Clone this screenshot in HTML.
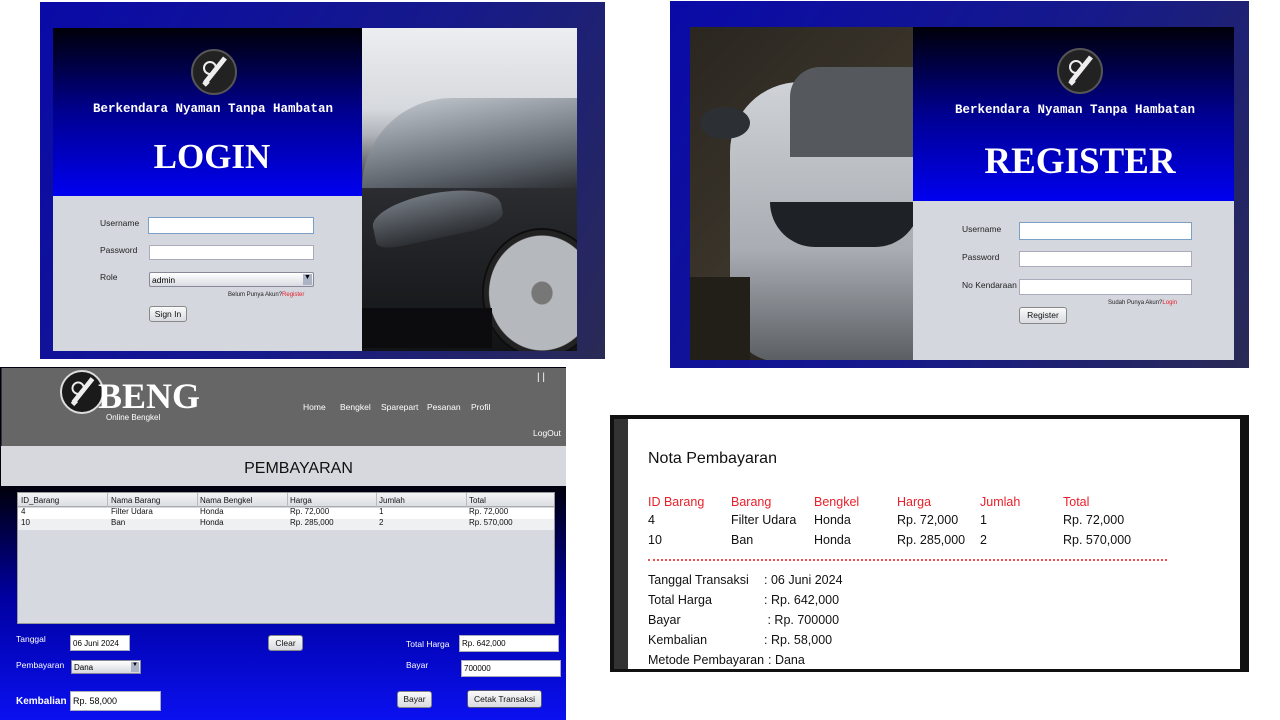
<!DOCTYPE html>
<html><head><meta charset="utf-8"><style>
*{margin:0;padding:0;box-sizing:border-box}
body{width:1280px;height:720px;background:#fff;position:relative;overflow:hidden;font-family:"Liberation Sans",sans-serif}
.a{position:absolute}
.frame{background:linear-gradient(120deg,#0a0aa8 0%,#161a8a 55%,#2a2a55 100%)}
.bluegrad{background:linear-gradient(#000008 0%,#000090 50%,#0000f0 100%)}
.gray{background:#d4d7de}
.mono{font-family:"Liberation Mono",monospace;font-weight:bold;color:#fff;font-size:12.5px;white-space:nowrap}
.serif{font-family:"Liberation Serif",serif;font-weight:bold;color:#fff}
.lbl{font-size:8.5px;color:#222}
.inp{background:#fff;border:1px solid #aab}
.btn{background:linear-gradient(#fafafa,#d8dbe0);border:1px solid #888;border-radius:3px;font-size:8.5px;color:#111;text-align:center}
.logo{border-radius:50%;background:#222;border:2px solid #555}
.wl{font-size:8.5px;color:#fff}
.nt{font-size:12.5px;color:#111}
.red{color:#e8202a}
.tc{white-space:nowrap}
</style></head><body>

<!-- LOGIN -->
<div class="a frame" style="left:40px;top:2px;width:565px;height:357px"></div>
<div class="a bluegrad" style="left:53px;top:28px;width:309px;height:168px"></div>
<div class="a logo" style="left:191px;top:49px;width:46px;height:46px"><svg width="42" height="42" viewBox="0 0 42 42"><path d="M12 32 L28 12 M15 30 l-4 4 M28 12 l4 -5" stroke="#eee" stroke-width="5" fill="none"/><circle cx="17" cy="17" r="6" fill="none" stroke="#eee" stroke-width="2"/></svg></div>
<div class="a mono" style="left:93px;top:102px">Berkendara Nyaman Tanpa Hambatan</div>
<div class="a serif" style="left:53px;width:318px;text-align:center;top:137px;font-size:35px">LOGIN</div>
<div class="a gray" style="left:53px;top:196px;width:309px;height:155px"></div>
<div class="a lbl" style="left:100px;top:218px">Username</div>
<div class="a inp" style="left:148px;top:217px;width:166px;height:17px;border-color:#7aa0c8"></div>
<div class="a lbl" style="left:100px;top:245px">Password</div>
<div class="a inp" style="left:149px;top:245px;width:165px;height:15px"></div>
<div class="a lbl" style="left:100px;top:272px">Role</div>
<div class="a" style="left:149px;top:272px;width:165px;height:15px;background:linear-gradient(#fff,#d8dbe2);border:1px solid #889;border-radius:2px;font-size:8.5px;padding:2px 2px">admin<span style="position:absolute;right:1px;top:1px;width:9px;height:11px;background:#aab4c4;font-size:7px;text-align:center">▼</span></div>
<div class="a" style="left:228px;top:292px;font-size:6px;color:#222">Belum Punya Akun?<span class="red">Register</span></div>
<div class="a btn" style="left:149px;top:306px;width:38px;height:16px;line-height:14px">Sign In</div>
<div class="a" style="left:362px;top:28px;width:215px;height:323px;overflow:hidden;background:linear-gradient(#eceef0 0%,#d6d9dd 25%,#b0b4ba 33%,#2a2c30 50%,#121315 100%)">
 <div class="a" style="left:0;top:70px;width:230px;height:90px;background:linear-gradient(170deg,#c8ced4,#5d636b 70%,#2a2c30);border-radius:150px 0 0 0"></div>
 <div class="a" style="left:10px;top:165px;width:130px;height:45px;background:linear-gradient(#70767e,#2c2f33);border-radius:50% 60% 30% 20%;transform:rotate(-12deg)"></div>
 <div class="a" style="left:120px;top:200px;width:120px;height:130px;border-radius:50%;background:radial-gradient(#777 0 12%,#b5b8bc 13% 62%,#222 63% 68%,#0d0d0d 69%)"></div>
 <div class="a" style="left:0;top:280px;width:130px;height:40px;background:#0c0c0e"></div>
</div>

<!-- REGISTER -->
<div class="a frame" style="left:670px;top:1px;width:579px;height:367px"></div>
<div class="a" style="left:690px;top:27px;width:223px;height:333px;overflow:hidden;background:linear-gradient(135deg,#2a2620,#3a342a 50%,#1a1814)">
 <div class="a" style="left:40px;top:55px;width:200px;height:280px;background:linear-gradient(#cfd2d6,#a9adb3 60%,#5a5d62);border-radius:70px 0 0 50px"></div>
 <div class="a" style="left:100px;top:40px;width:140px;height:90px;background:#55595e;border-radius:30px 0 0 0"></div>
 <div class="a" style="left:80px;top:175px;width:150px;height:45px;background:#1e2125;border-radius:0 0 50px 50px"></div>
 <div class="a" style="left:10px;top:80px;width:50px;height:32px;background:#2c2f33;border-radius:50%"></div>
 <div class="a" style="left:0;top:250px;width:60px;height:83px;background:#221e18"></div>
</div>
<div class="a bluegrad" style="left:913px;top:27px;width:321px;height:174px"></div>
<div class="a logo" style="left:1057px;top:48px;width:46px;height:46px"><svg width="42" height="42" viewBox="0 0 42 42"><path d="M12 32 L28 12 M15 30 l-4 4 M28 12 l4 -5" stroke="#eee" stroke-width="5" fill="none"/><circle cx="17" cy="17" r="6" fill="none" stroke="#eee" stroke-width="2"/></svg></div>
<div class="a mono" style="left:955px;top:103px">Berkendara Nyaman Tanpa Hambatan</div>
<div class="a serif" style="left:913px;width:334px;text-align:center;top:140px;font-size:37px">REGISTER</div>
<div class="a gray" style="left:913px;top:201px;width:321px;height:159px"></div>
<div class="a lbl" style="left:962px;top:224px">Username</div>
<div class="a inp" style="left:1019px;top:222px;width:173px;height:18px;border-color:#7aa0c8"></div>
<div class="a lbl" style="left:962px;top:252px">Password</div>
<div class="a inp" style="left:1019px;top:251px;width:173px;height:16px"></div>
<div class="a lbl" style="left:962px;top:280px">No Kendaraan</div>
<div class="a inp" style="left:1019px;top:279px;width:173px;height:16px"></div>
<div class="a" style="left:1108px;top:300px;font-size:6px;color:#222">Sudah Punya Akun?<span class="red">Login</span></div>
<div class="a btn" style="left:1019px;top:307px;width:48px;height:17px;line-height:15px">Register</div>

<!-- PEMBAYARAN -->
<div class="a" style="left:0;top:367px;width:566px;height:353px;background:linear-gradient(#000010 35%,#0000a0 65%,#0a10f0 100%)"></div>
<div class="a" style="left:1px;top:368px;width:565px;height:78px;background:#666;border-left:1px solid #333"></div>
<div class="a logo" style="left:60px;top:370px;width:44px;height:44px;background:#1a1a1a;border-color:#ddd"><svg width="40" height="40" viewBox="0 0 42 42"><path d="M12 32 L28 12 M15 30 l-4 4 M28 12 l4 -5" stroke="#eee" stroke-width="5" fill="none"/><circle cx="17" cy="17" r="6" fill="none" stroke="#eee" stroke-width="2"/></svg></div>
<div class="a serif" style="left:98px;top:378px;font-size:36px;line-height:36px">BENG</div>
<div class="a" style="left:106px;top:413px;font-size:8px;color:#fff">Online Bengkel</div>
<div class="a wl" style="left:303px;top:402px">Home</div>
<div class="a wl" style="left:340px;top:402px">Bengkel</div>
<div class="a wl" style="left:381px;top:402px">Sparepart</div>
<div class="a wl" style="left:427px;top:402px">Pesanan</div>
<div class="a wl" style="left:471px;top:402px">Profil</div>
<div class="a wl" style="left:537px;top:372px;font-size:10px">| |</div>
<div class="a wl" style="left:533px;top:428px">LogOut</div>
<div class="a" style="left:1px;top:446px;width:565px;height:40px;background:#d6d8dd;font-size:16px;color:#111;text-align:center;line-height:46px;padding-left:30px">PEMBAYARAN</div>
<div class="a" style="left:17px;top:492px;width:538px;height:132px;background:#d6d9df;border:1px solid #999"></div>
<div class="a" style="left:18px;top:493px;width:536px;height:14px;background:linear-gradient(#f4f4f6,#dcdee3);border-bottom:1px solid #aaa"></div>
<div class="a" style="left:18px;top:508px;width:536px;height:11px;background:#fff"></div>
<div class="a" style="left:18px;top:519px;width:536px;height:11px;background:#eef0f2"></div>
<div class="a" style="left:0;top:495px;font-size:8px;color:#111;line-height:11px">
<div class="a tc" style="left:21px">ID_Barang<br>4<br>10</div>
<div class="a tc" style="left:111px">Nama Barang<br>Filter Udara<br>Ban</div>
<div class="a tc" style="left:200px">Nama Bengkel<br>Honda<br>Honda</div>
<div class="a tc" style="left:290px">Harga<br>Rp. 72,000<br>Rp. 285,000</div>
<div class="a tc" style="left:379px">Jumlah<br>1<br>2</div>
<div class="a tc" style="left:469px">Total<br>Rp. 72,000<br>Rp. 570,000</div>
</div>
<div class="a" style="left:107px;top:493px;width:1px;height:14px;background:#bbb"></div>
<div class="a" style="left:197px;top:493px;width:1px;height:14px;background:#bbb"></div>
<div class="a" style="left:287px;top:493px;width:1px;height:14px;background:#bbb"></div>
<div class="a" style="left:376px;top:493px;width:1px;height:14px;background:#bbb"></div>
<div class="a" style="left:466px;top:493px;width:1px;height:14px;background:#bbb"></div>
<div class="a wl" style="left:16px;top:634px">Tanggal</div>
<div class="a inp" style="left:70px;top:635px;width:60px;height:16px;font-size:8px;padding:3px 2px">06 Juni 2024</div>
<div class="a btn" style="left:268px;top:635px;width:35px;height:16px;line-height:14px">Clear</div>
<div class="a wl" style="left:406px;top:639px">Total Harga</div>
<div class="a inp" style="left:459px;top:635px;width:100px;height:17px;font-size:8px;padding:3px 2px">Rp. 642,000</div>
<div class="a wl" style="left:16px;top:660px">Pembayaran</div>
<div class="a" style="left:71px;top:660px;width:70px;height:14px;background:linear-gradient(#fff,#d4d8de);border:1px solid #889;font-size:8px;padding:2px">Dana<span style="position:absolute;right:1px;top:1px;width:8px;height:10px;background:#aab4c4;font-size:6px;text-align:center">▼</span></div>
<div class="a wl" style="left:406px;top:660px">Bayar</div>
<div class="a inp" style="left:461px;top:660px;width:100px;height:17px;font-size:8px;padding:3px 2px">700000</div>
<div class="a" style="left:16px;top:696px;font-size:10px;font-weight:bold;color:#fff">Kembalian</div>
<div class="a inp" style="left:70px;top:691px;width:91px;height:20px;font-size:9px;padding:4px 2px">Rp. 58,000</div>
<div class="a btn" style="left:397px;top:691px;width:35px;height:17px;line-height:15px">Bayar</div>
<div class="a btn" style="left:467px;top:690px;width:75px;height:18px;line-height:16px;border-color:#557">Cetak Transaksi</div>

<!-- NOTA -->
<div class="a" style="left:610px;top:415px;width:639px;height:257px;background:#111"></div>
<div class="a" style="left:614px;top:419px;width:14px;height:250px;background:#333"></div>
<div class="a" style="left:628px;top:419px;width:612px;height:250px;background:#fff"></div>
<div class="a" style="left:648px;top:450px;font-size:16px;color:#111">Nota Pembayaran</div>
<div class="a nt" style="left:0;top:492px;line-height:20px">
<div class="a red tc" style="left:648px">ID Barang</div><div class="a red" style="left:731px">Barang</div><div class="a red" style="left:814px">Bengkel</div><div class="a red" style="left:897px">Harga</div><div class="a red" style="left:980px">Jumlah</div><div class="a red" style="left:1063px">Total</div>
</div>
<div class="a nt" style="left:0;top:510px;line-height:20px;white-space:nowrap">
<div class="a" style="left:648px">4<br>10</div><div class="a" style="left:731px">Filter Udara<br>Ban</div><div class="a" style="left:814px">Honda<br>Honda</div><div class="a" style="left:897px">Rp. 72,000<br>Rp. 285,000</div><div class="a" style="left:980px">1<br>2</div><div class="a" style="left:1063px">Rp. 72,000<br>Rp. 570,000</div>
</div>
<div class="a" style="left:648px;top:559px;width:519px;border-top:2px dotted #f05050"></div>
<div class="a nt" style="left:648px;top:570px;line-height:20px;white-space:nowrap">Tanggal Transaksi<br>Total Harga<br>Bayar<br>Kembalian<br>Metode Pembayaran</div>
<div class="a nt" style="left:764px;top:570px;line-height:20px;white-space:nowrap">: 06 Juni 2024<br>: Rp. 642,000<br>&nbsp;: Rp. 700000<br>: Rp. 58,000<br></div>
<div class="a nt" style="left:768px;top:650px;line-height:20px">: Dana</div>
</body></html>
